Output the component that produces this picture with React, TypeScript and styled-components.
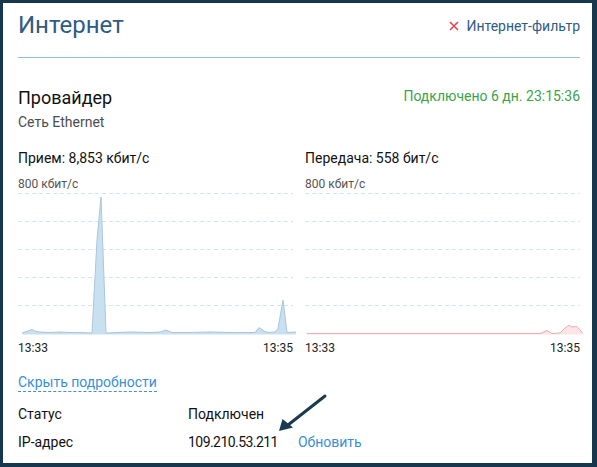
import styled, { createGlobalStyle } from 'styled-components'

type Point = [number, number]

type ChartProps = {
  fill: string
  points: Point[]
  stroke: string
}

const CHART_W = 275
const CHART_H = 148
const BASE_Y = 141.5
const GRID_Y = [1.5, 29.5, 57.5, 85.5, 113.5]

// sampled from the graph, page coords minus the column origin (x 18 / 305, y 192)
const rxPoints: Point[] = [
  [4, 141], [10, 139], [14, 137.5], [18, 139.5], [22, 140], [32, 140.5],
  [42, 140], [52, 140.5], [62, 140.5], [74, 141], [79, 48], [83, 5],
  [88, 141], [100, 140.5], [112, 140], [132, 140.5], [142, 140], [148, 138],
  [154, 140.5], [172, 140.5], [192, 140], [212, 140.5], [237, 140.5],
  [241, 135.5], [246, 139], [250, 140.5], [257, 140], [260, 136.5],
  [265, 108], [269, 140.5], [278, 140],
]

const txPoints: Point[] = [
  [2, 141.5], [60, 141.5], [120, 141.5], [180, 141.5], [235, 141.5],
  [242, 138.5], [247, 141.5], [255, 141], [259, 137], [264, 133],
  [267, 135], [272, 134.5], [278, 141.5],
]

function TrafficChart({ fill, points, stroke }: ChartProps) {
  const line = points.map(([x, y]) => `${x},${y}`).join(' ')
  const first = points[0]
  const last = points[points.length - 1]
  const area = `M${first[0]},${BASE_Y + 1} L${line.replace(/ /g, ' L')} L${last[0]},${BASE_Y + 1} Z`

  return (
    <ChartSvg viewBox={`0 0 ${CHART_W} ${CHART_H}`} width={CHART_W} height={CHART_H}>
      {GRID_Y.map((y) => (
        <line
          key={y}
          x1="0"
          x2={CHART_W}
          y1={y}
          y2={y}
          stroke="#cfe6f5"
          strokeWidth="1"
          strokeDasharray="4 3"
        />
      ))}
      <path d={area} fill={fill} />
      <polyline points={line} fill="none" stroke={stroke} strokeWidth="1" />
    </ChartSvg>
  )
}

function CrossIcon() {
  return (
    <svg viewBox="0 0 10 10" width="10" height="10" aria-hidden="true">
      <path d="M1 1L9 9M9 1L1 9" stroke="#e4474b" strokeWidth="1.6" />
    </svg>
  )
}

function PointerArrow() {
  return (
    <ArrowSvg viewBox="0 0 50 40" width="50" height="40" aria-hidden="true">
      <path d="M47 3L10 32" stroke="#1b3a50" strokeWidth="3" strokeLinecap="round" />
      <path d="M1 38L4.5 26L15 34.5Z" fill="#1b3a50" />
    </ArrowSvg>
  )
}

export default function App() {
  return (
    <>
      <GlobalStyle />
      <Frame>
        <Header>
          <Title>Интернет</Title>
          <FilterLink>
            <CrossIcon />
            Интернет-фильтр
          </FilterLink>
        </Header>
        <Divider />

        <ProviderRow>
          <div>
            <ProviderName>Провайдер</ProviderName>
            <ProviderType>Сеть Ethernet</ProviderType>
          </div>
          <Uptime>Подключено 6 дн. 23:15:36</Uptime>
        </ProviderRow>

        <Charts>
          <ChartColumn>
            <RateLabel>Прием: 8,853 кбит/с</RateLabel>
            <ScaleLabel>800 кбит/с</ScaleLabel>
            <TrafficChart points={rxPoints} fill="#c9e0f1" stroke="#a9c6db" />
            <TimeAxis>
              <span>13:33</span>
              <span>13:35</span>
            </TimeAxis>
          </ChartColumn>
          <ChartColumn>
            <RateLabel>Передача: 558 бит/с</RateLabel>
            <ScaleLabel>800 кбит/с</ScaleLabel>
            <TrafficChart points={txPoints} fill="#fde4e7" stroke="#f1aab2" />
            <TimeAxis>
              <span>13:33</span>
              <span>13:35</span>
            </TimeAxis>
          </ChartColumn>
        </Charts>

        <DetailsToggle>Скрыть подробности</DetailsToggle>

        <DetailsTable>
          <DetailLabel>Статус</DetailLabel>
          <DetailValue>Подключен</DetailValue>
          <DetailLabel>IP-адрес</DetailLabel>
          <DetailValue>
            <IpAddress>109.210.53.211</IpAddress>
            <RefreshLink>Обновить</RefreshLink>
            <PointerArrow />
          </DetailValue>
        </DetailsTable>
      </Frame>
    </>
  )
}

const GlobalStyle = createGlobalStyle`
  html, body {
    margin: 0;
    padding: 0;
    background: #ffffff;
  }

  body {
    font-family: Roboto, "Noto Sans", "Liberation Sans", sans-serif;
    color: #111111;
  }
`

const Frame = styled.div`
  position: relative;
  box-sizing: border-box;
  width: 597px;
  height: 467px;
  padding: 8px 12px 0 15px;
  border-style: solid;
  border-color: #17374f;
  border-width: 3px 5px 4px 3px;
  background: #ffffff;
  overflow: hidden;
`

const Header = styled.header`
  display: flex;
  align-items: center;
  justify-content: space-between;
  height: 28px;
`

const Title = styled.h1`
  margin: 0;
  font-size: 24px;
  font-weight: 400;
  line-height: 28px;
  color: #2e5c84;
`

const FilterLink = styled.a`
  display: inline-flex;
  align-items: center;
  gap: 7px;
  margin-top: 2px;
  font-size: 14px;
  line-height: 18px;
  color: #2e5c84;
  cursor: pointer;
`

const Divider = styled.hr`
  height: 1px;
  margin: 18px 0 0;
  border: 0;
  background: #8dc0e2;
`

const ProviderRow = styled.section`
  display: flex;
  align-items: flex-start;
  justify-content: space-between;
  margin-top: 29px;
`

const ProviderName = styled.h2`
  margin: 0;
  font-size: 18px;
  font-weight: 400;
  line-height: 22px;
  color: #111111;
`

const ProviderType = styled.div`
  margin-top: 4px;
  font-size: 14px;
  line-height: 18px;
  color: #4d4d4d;
`

const Uptime = styled.div`
  font-size: 14px;
  line-height: 18px;
  color: #3ba34a;
`

const Charts = styled.section`
  display: grid;
  grid-template-columns: 275px 275px;
  column-gap: 12px;
  margin-top: 18px;
`

const ChartColumn = styled.div`
  display: flex;
  flex-direction: column;
`

const RateLabel = styled.div`
  font-size: 14px;
  line-height: 18px;
  color: #111111;
`

const ScaleLabel = styled.div`
  margin-top: 9px;
  font-size: 12px;
  line-height: 16px;
  color: #555555;
`

const ChartSvg = styled.svg`
  display: block;
  overflow: visible;
`

const TimeAxis = styled.div`
  display: flex;
  justify-content: space-between;
  font-size: 12px;
  line-height: 16px;
  color: #222222;
`

const DetailsToggle = styled.a`
  display: inline-block;
  margin-top: 18px;
  font-size: 14px;
  line-height: 17px;
  color: #3a8fd5;
  border-bottom: 1px dashed #3a8fd5;
  cursor: pointer;
`

const DetailsTable = styled.dl`
  display: grid;
  grid-template-columns: 170px 1fr;
  row-gap: 10px;
  margin: 13px 0 0;
  font-size: 14px;
  line-height: 18px;
`

const DetailLabel = styled.dt`
  margin: 0;
  color: #111111;
`

const DetailValue = styled.dd`
  position: relative;
  margin: 0;
  color: #111111;
`

const IpAddress = styled.span`
  letter-spacing: -0.55px;
`

const RefreshLink = styled.a`
  margin-left: 20px;
  color: #3a8fd5;
  cursor: pointer;
`

const ArrowSvg = styled.svg`
  position: absolute;
  left: 90px;
  top: -40px;
  overflow: visible;
`
